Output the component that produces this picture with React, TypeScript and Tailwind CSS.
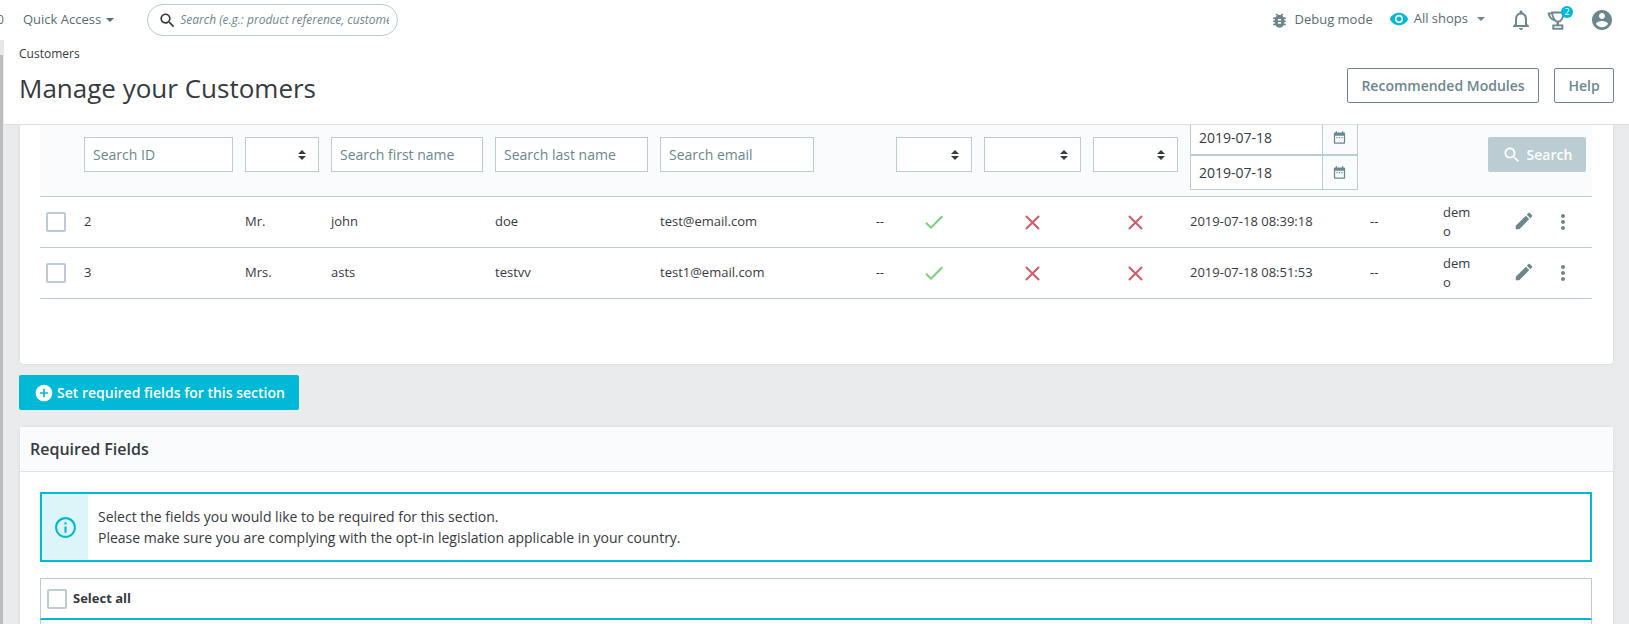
const paths = {
  search:
    "M15.5 14h-.79l-.28-.27C15.41 12.59 16 11.11 16 9.5 16 5.91 13.09 3 9.5 3S3 5.91 3 9.5 5.91 16 9.5 16c1.61 0 3.09-.59 4.23-1.57l.27.28v.79l5 4.99L20.49 19l-4.99-5zm-6 0C7.01 14 5 11.99 5 9.5S7.01 5 9.5 5 14 7.01 14 9.5 11.99 14 9.5 14z",
  bug: "M20 8h-2.81c-.45-.78-1.07-1.45-1.82-1.96L17 4.41 15.59 3l-2.17 2.17C12.96 5.06 12.49 5 12 5c-.49 0-.96.06-1.41.17L8.41 3 7 4.41l1.62 1.63C7.88 6.55 7.26 7.22 6.81 8H4v2h2.09c-.05.33-.09.66-.09 1v1H4v2h2v1c0 .34.04.67.09 1H4v2h2.81c1.04 1.79 2.97 3 5.19 3s4.15-1.21 5.19-3H20v-2h-2.09c.05-.33.09-.66.09-1v-1h2v-2h-2v-1c0-.34-.04-.67-.09-1H20V8zm-6 8h-4v-2h4v2zm0-4h-4v-2h4v2z",
  eye: "M12 4.5C7 4.5 2.73 7.61 1 12c1.73 4.39 6 7.5 11 7.5s9.27-3.11 11-7.5c-1.73-4.39-6-7.5-11-7.5zM12 17c-2.76 0-5-2.24-5-5s2.24-5 5-5 5 2.24 5 5-2.24 5-5 5zm0-8c-1.66 0-3 1.34-3 3s1.34 3 3 3 3-1.34 3-3-1.34-3-3-3z",
  bell: "M12 22c1.1 0 2-.9 2-2h-4c0 1.1.9 2 2 2zm6-6v-5c0-3.07-1.63-5.64-4.5-6.32V4c0-.83-.67-1.5-1.5-1.5s-1.5.67-1.5 1.5v.68C7.64 5.36 6 7.92 6 11v5l-2 2v1h16v-1l-2-2zm-2 1H8v-6c0-2.48 1.51-4.5 4-4.5s4 2.02 4 4.5v6z",
  account:
    "M12 2C6.48 2 2 6.48 2 12s4.48 10 10 10 10-4.48 10-10S17.52 2 12 2zm0 3c1.66 0 3 1.34 3 3s-1.34 3-3 3-3-1.34-3-3 1.34-3 3-3zm0 14.2c-2.5 0-4.71-1.28-6-3.22.03-1.99 4-3.08 6-3.08 1.99 0 5.97 1.09 6 3.08-1.29 1.94-3.5 3.22-6 3.22z",
  date: "M9 11H7v2h2v-2zm4 0h-2v2h2v-2zm4 0h-2v2h2v-2zm2-7h-1V2h-2v2H8V2H6v2H5c-1.11 0-1.99.9-1.99 2L3 20c0 1.1.89 2 2 2h14c1.1 0 2-.9 2-2V6c0-1.1-.9-2-2-2zm0 16H5V9h14v11z",
  edit: "M3 17.25V21h3.75L17.81 9.94l-3.75-3.75L3 17.25zM20.71 7.04c.39-.39.39-1.02 0-1.41l-2.34-2.34c-.39-.39-1.02-.39-1.41 0l-1.83 1.83 3.75 3.75 1.83-1.83z",
  more: "M12 8c1.1 0 2-.9 2-2s-.9-2-2-2-2 .9-2 2 .9 2 2 2zm0 2c-1.1 0-2 .9-2 2s.9 2 2 2 2-.9 2-2-.9-2-2-2zm0 6c-1.1 0-2 .9-2 2s.9 2 2 2 2-.9 2-2-.9-2-2-2z",
  check: "M9 16.17L4.83 12l-1.42 1.41L9 19 21 7l-1.41-1.41z",
  clear:
    "M19 6.41L17.59 5 12 10.59 6.41 5 5 6.41 10.59 12 5 17.59 6.41 19 12 13.41 17.59 19 19 17.59 13.41 12z",
  plus: "M12 2C6.48 2 2 6.48 2 12s4.48 10 10 10 10-4.48 10-10S17.52 2 12 2zm5 11h-4v4h-2v-4H7v-2h4V7h2v4h4v2z",
  info: "M11 7h2v2h-2zm0 4h2v6h-2zm1-9C6.48 2 2 6.48 2 12s4.48 10 10 10 10-4.48 10-10S17.52 2 12 2zm0 18c-4.41 0-8-3.59-8-8s3.59-8 8-8 8 3.59 8 8-3.59 8-8 8z",
};

const Icon = ({ name, className }: { name: keyof typeof paths; className: string }) => (
  <svg viewBox="0 0 24 24" fill="currentColor" className={className}>
    <path d={paths[name]} />
  </svg>
);

// the badge in the top bar is a tilted cup on a box, no package has this one
const Trophy = ({ className }: { className: string }) => (
  <svg viewBox="0 0 24 24" fill="none" stroke="currentColor" strokeWidth="2.2" className={className}>
    <path d="M6 3H20C20 9 17 14 13 14C9.5 14 6.5 9 6 3Z" />
    <path d="M6 4H2C2.5 8 5 11 9 12.5" />
    <path d="M13 14V18" strokeWidth="3" />
    <rect x="7.5" y="18.5" width="11" height="4" />
  </svg>
);

const cols =
  "grid grid-cols-[32px_149px_74px_152px_153px_154px_58px_76px_97px_85px_168px_61px_33px_98px] gap-x-3";

const Caret = ({ className }: { className: string }) => (
  <span
    className={`inline-block border-x-[4px] border-t-[4px] border-x-transparent border-t-current ${className}`}
  />
);

const Checkbox = () => (
  <span className="block w-5 h-5 rounded-[2px] border-2 border-[#bbcdd2] bg-white" />
);

const TextFilter = ({ placeholder }: { placeholder: string }) => (
  <input
    placeholder={placeholder}
    className="w-full h-[35px] border border-[#bbcdd2] bg-white px-2 text-sm outline-none placeholder:text-[#6c868e]"
  />
);

const SelectFilter = () => (
  <div className="h-[35px] border border-[#bbcdd2] bg-white flex flex-col items-end justify-center gap-[2px] pr-[12px] text-[#363a41]">
    <span className="border-x-[4px] border-b-[4px] border-x-transparent border-b-current" />
    <span className="border-x-[4px] border-t-[4px] border-x-transparent border-t-current" />
  </div>
);

const DateFilter = () => (
  <div className="flex h-[35px] border border-[#bbcdd2] bg-white">
    <span className="flex-1 px-2 text-sm leading-[33px]">2019-07-18</span>
    <span className="w-[35px] border-l border-[#bbcdd2] bg-[#fafbfc] flex items-center justify-center text-[#6c868e]">
      <Icon name="date" className="w-[15px] h-[15px] -ml-[2px]" />
    </span>
  </div>
);

const customers = [
  { id: "2", social: "Mr.", first: "john", last: "doe", email: "test@email.com", date: "2019-07-18 08:39:18" },
  { id: "3", social: "Mrs.", first: "asts", last: "testvv", email: "test1@email.com", date: "2019-07-18 08:51:53" },
];

export default function App() {
  return (
    <div className="w-[1629px] h-[624px] overflow-hidden flex flex-col bg-[#eaebec] text-[#363a41] font-['Open_Sans',sans-serif]">
      {/* top bar */}
      <nav className="relative z-20 h-10 shrink-0 bg-white flex items-center text-[13px] text-[#576c75]">
        <span className="-ml-[3px] w-[26px] text-xs">0</span>
        <span>Quick Access</span>
        <Caret className="ml-[5px]" />
        <div className="ml-[33px] w-[251px] h-8 rounded-full border border-[#bbcdd2] flex items-center pl-[10px] pr-2 overflow-hidden">
          <Icon name="search" className="w-[19px] h-[19px] shrink-0 text-[#363a41]" />
          <span className="ml-[3px] text-xs italic text-[#6c868e] whitespace-nowrap overflow-hidden">
            Search (e.g.: product reference, customer name…)
          </span>
        </div>
        <div className="ml-auto flex items-center pr-[15px]">
          <Icon name="bug" className="w-[19px] h-[19px] text-[#6c868e]" />
          <span className="ml-[5px] text-[13px]">Debug mode</span>
          <Icon name="eye" className="ml-[16px] -mt-[3px] w-5 h-5 text-[#00b9d6]" />
          <span className="ml-[5px] -mt-[3px] text-[13px]">All shops</span>
          <Caret className="ml-[9px] -mt-[3px] text-[#6c868e]" />
          <Icon name="bell" className="ml-[24px] w-6 h-6 text-[#6c868e]" />
          <div className="relative ml-[14px]">
            <Trophy className="w-5 h-5 text-[#6c868e]" />
            <span className="absolute -top-[4px] -right-[6px] w-3 h-3 rounded-full bg-[#00b9d6] text-white text-[9px] leading-3 text-center">
              2
            </span>
          </div>
          <Icon name="account" className="ml-[23px] w-6 h-6 text-[#6c868e]" />
        </div>
      </nav>

      <div className="flex-1 flex min-h-0">
        {/* edge of the side menu */}
        <div className="w-1 shrink-0 flex flex-col">
          <div className="h-[15px] bg-[#e8e8e8]" />
          <div className="flex-1 w-[3px] bg-[#bdbdbd]" />
        </div>

        <div className="flex-1 min-w-0">
          {/* page head */}
          <header className="relative z-10 h-[85px] bg-white border-b border-[#dfdfdf] pl-[15px] pr-[15px] flex justify-between">
            <div>
              <div className="text-xs leading-4 mt-[6px]">Customers</div>
              <h1 className="text-[26px] leading-[36px] mt-[8px]">Manage your Customers</h1>
            </div>
            <div className="flex gap-[15px] mt-[28px] text-sm font-semibold text-[#6c868e]">
              <button className="h-[35px] w-[192px] rounded-[2px] border border-[#6c868e] bg-white">
                Recommended Modules
              </button>
              <button className="h-[35px] w-[60px] rounded-[2px] border border-[#6c868e] bg-white">Help</button>
            </div>
          </header>

          <main className="pl-4 pr-4">
            {/* customers card */}
            <section className="h-[239px] rounded-b-[4px] bg-white shadow-[0_0_4px_rgba(0,0,0,0.08)] pl-5 pr-[21px]">
              <div className={`${cols} h-[72px] bg-[#fafbfc] border-b border-[#bbcdd2] pt-3`}>
                <div />
                <TextFilter placeholder="Search ID" />
                <SelectFilter />
                <TextFilter placeholder="Search first name" />
                <TextFilter placeholder="Search last name" />
                <TextFilter placeholder="Search email" />
                <div />
                <SelectFilter />
                <SelectFilter />
                <SelectFilter />
                <div className="-mt-[17px]">
                  <DateFilter />
                  <DateFilter />
                </div>
                <div />
                <div />
                <button className="h-[35px] rounded-[2px] bg-[#bbcdd2] text-white text-sm font-semibold flex items-center justify-center gap-[5px]">
                  <Icon name="search" className="w-5 h-5" />
                  Search
                </button>
              </div>
              {customers.map((c) => (
                <div key={c.id} className={`${cols} h-[51px] items-center border-b border-[#bbcdd2] text-[13px]`}>
                  <div className="pl-[6px]">
                    <Checkbox />
                  </div>
                  <div>{c.id}</div>
                  <div>{c.social}</div>
                  <div>{c.first}</div>
                  <div>{c.last}</div>
                  <div>{c.email}</div>
                  <div className="text-right">--</div>
                  <Icon name="check" className="justify-self-center w-6 h-6 text-[#78d07d]" />
                  <Icon name="clear" className="justify-self-center w-[25px] h-[25px] text-[#cd5e6a]" />
                  <Icon name="clear" className="justify-self-center w-[25px] h-[25px] text-[#cd5e6a]" />
                  <div className="whitespace-nowrap">{c.date}</div>
                  <div>--</div>
                  <div className="w-[29px] break-all leading-[19.5px]">demo</div>
                  <div className="flex items-center text-[#6c868e] pl-[25px]">
                    <Icon name="edit" className="w-[22px] h-[22px] -mt-[2px]" />
                    <Icon name="more" className="ml-[16px] w-6 h-6" />
                  </div>
                </div>
              ))}
            </section>

            <button className="mt-[11px] -ml-px h-[35px] w-[280px] rounded-[2px] bg-[#00b9d6] text-white text-sm font-semibold flex items-center pl-[15px] gap-[3px]">
              <Icon name="plus" className="w-5 h-5" />
              Set required fields for this section
            </button>

            {/* required fields card */}
            <section className="mt-[17px] rounded-t-[4px] bg-white shadow-[0_0_4px_rgba(0,0,0,0.08)]">
              <div className="h-[45px] bg-[#fafbfc] border-b border-[#dbe6e9] flex items-center px-[10px] text-base font-semibold">
                Required Fields
              </div>
              <div className="pl-5 pr-[21px] pt-5">
                <div className="h-[70px] border-2 border-[#00b9d6] flex items-stretch">
                  <div className="w-[46px] bg-[#dcf5f9] flex items-center justify-center text-[#00b9d6]">
                    <Icon name="info" className="w-[25px] h-[25px]" />
                  </div>
                  <div className="pl-[10px] text-sm leading-[21px] flex flex-col justify-center">
                    <p>Select the fields you would like to be required for this section.</p>
                    <p>Please make sure you are complying with the opt-in legislation applicable in your country.</p>
                  </div>
                </div>
                <div className="mt-4 h-[42px] border border-[#bbcdd2] border-b-2 border-b-[#00b9d6] flex items-center pl-[6px] gap-[6px] text-[13px] font-bold">
                  <Checkbox />
                  Select all
                </div>
                <div className="h-5 border-x border-[#bbcdd2]" />
              </div>
            </section>
          </main>
        </div>
      </div>
    </div>
  );
}
